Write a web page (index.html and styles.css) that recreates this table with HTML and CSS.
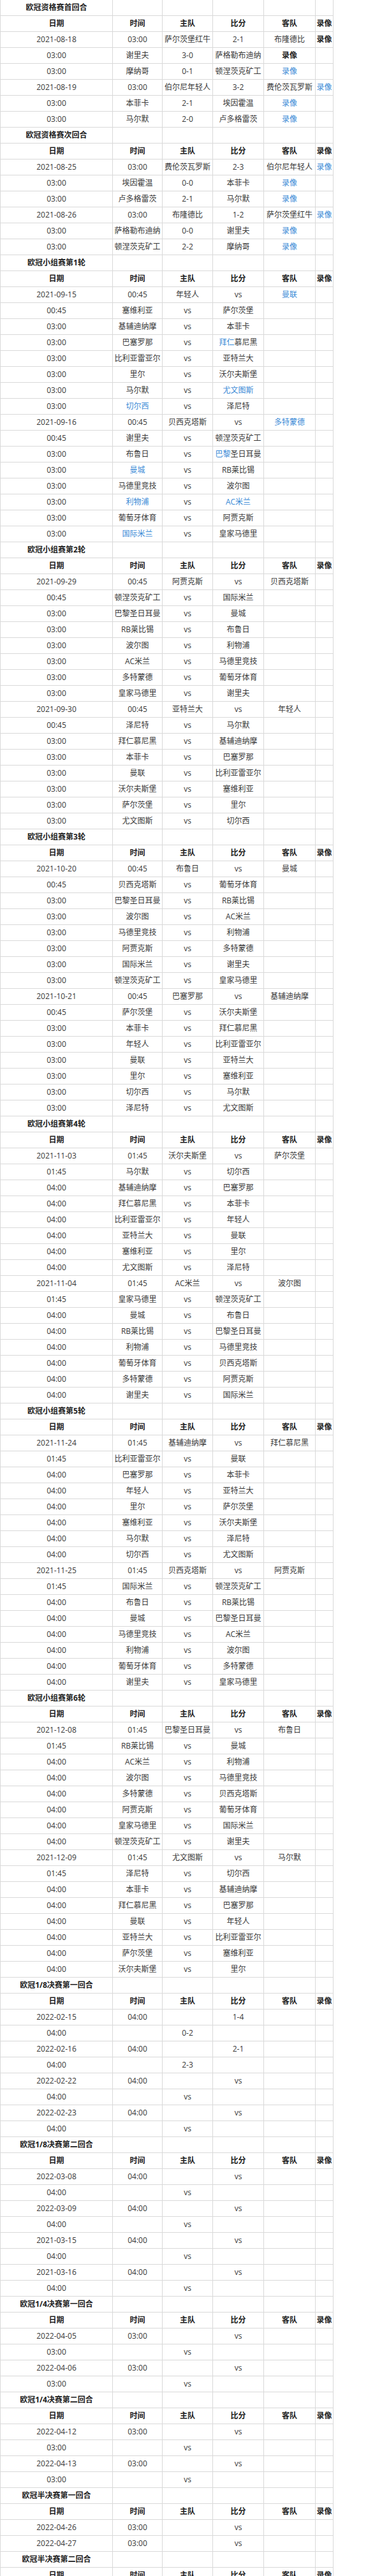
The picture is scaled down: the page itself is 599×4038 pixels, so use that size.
FILE: index.html
```html
<!DOCTYPE html>
<html lang="zh-CN">
<head>
<meta charset="utf-8">
<title>欧冠赛程</title>
<link rel="stylesheet" href="styles.css">
</head>
<body>
<table class="schedule">
<colgroup><col class="c1"><col class="c2"><col class="c3"><col class="c4"><col class="c5"><col class="c6"></colgroup>
<tbody>
<tr class="title"><td>欧冠资格赛首回合</td><td></td><td></td><td></td><td></td><td></td></tr>
<tr class="head"><td>日期</td><td>时间</td><td>主队</td><td>比分</td><td>客队</td><td>录像</td></tr>
<tr><td>2021-08-18</td><td>03:00</td><td>萨尔茨堡红牛</td><td>2-1</td><td>布隆德比</td><td><span class="vd">录像</span></td></tr>
<tr><td>03:00</td><td>谢里夫</td><td>3-0</td><td>萨格勒布迪纳</td><td><span class="vd">录像</span></td><td></td></tr>
<tr><td>03:00</td><td>摩纳哥</td><td>0-1</td><td>顿涅茨克矿工</td><td><span class="lk">录像</span></td><td></td></tr>
<tr><td>2021-08-19</td><td>03:00</td><td>伯尔尼年轻人</td><td>3-2</td><td>费伦茨瓦罗斯</td><td><span class="lk">录像</span></td></tr>
<tr><td>03:00</td><td>本菲卡</td><td>2-1</td><td>埃因霍温</td><td><span class="lk">录像</span></td><td></td></tr>
<tr><td>03:00</td><td>马尔默</td><td>2-0</td><td>卢多格雷茨</td><td><span class="lk">录像</span></td><td></td></tr>
<tr class="title"><td>欧冠资格赛次回合</td><td></td><td></td><td></td><td></td><td></td></tr>
<tr class="head"><td>日期</td><td>时间</td><td>主队</td><td>比分</td><td>客队</td><td>录像</td></tr>
<tr><td>2021-08-25</td><td>03:00</td><td>费伦茨瓦罗斯</td><td>2-3</td><td>伯尔尼年轻人</td><td><span class="lk">录像</span></td></tr>
<tr><td>03:00</td><td>埃因霍温</td><td>0-0</td><td>本菲卡</td><td><span class="lk">录像</span></td><td></td></tr>
<tr><td>03:00</td><td>卢多格雷茨</td><td>2-1</td><td>马尔默</td><td><span class="lk">录像</span></td><td></td></tr>
<tr><td>2021-08-26</td><td>03:00</td><td>布隆德比</td><td>1-2</td><td>萨尔茨堡红牛</td><td><span class="lk">录像</span></td></tr>
<tr><td>03:00</td><td>萨格勒布迪纳</td><td>0-0</td><td>谢里夫</td><td><span class="lk">录像</span></td><td></td></tr>
<tr><td>03:00</td><td>顿涅茨克矿工</td><td>2-2</td><td>摩纳哥</td><td><span class="lk">录像</span></td><td></td></tr>
<tr class="title"><td>欧冠小组赛第1轮</td><td></td><td></td><td></td><td></td><td></td></tr>
<tr class="head"><td>日期</td><td>时间</td><td>主队</td><td>比分</td><td>客队</td><td>录像</td></tr>
<tr><td>2021-09-15</td><td>00:45</td><td>年轻人</td><td>vs</td><td><span class="lk">曼联</span></td><td></td></tr>
<tr><td>00:45</td><td>塞维利亚</td><td>vs</td><td>萨尔茨堡</td><td></td><td></td></tr>
<tr><td>03:00</td><td>基辅迪纳摩</td><td>vs</td><td>本菲卡</td><td></td><td></td></tr>
<tr><td>03:00</td><td>巴塞罗那</td><td>vs</td><td><span class="lk">拜仁</span>慕尼黑</td><td></td><td></td></tr>
<tr><td>03:00</td><td>比利亚雷亚尔</td><td>vs</td><td>亚特兰大</td><td></td><td></td></tr>
<tr><td>03:00</td><td>里尔</td><td>vs</td><td>沃尔夫斯堡</td><td></td><td></td></tr>
<tr><td>03:00</td><td>马尔默</td><td>vs</td><td><span class="lk">尤文图斯</span></td><td></td><td></td></tr>
<tr><td>03:00</td><td><span class="lk">切尔西</span></td><td>vs</td><td>泽尼特</td><td></td><td></td></tr>
<tr><td>2021-09-16</td><td>00:45</td><td>贝西克塔斯</td><td>vs</td><td><span class="lk">多特蒙德</span></td><td></td></tr>
<tr><td>00:45</td><td>谢里夫</td><td>vs</td><td>顿涅茨克矿工</td><td></td><td></td></tr>
<tr><td>03:00</td><td>布鲁日</td><td>vs</td><td><span class="lk">巴黎</span>圣日耳曼</td><td></td><td></td></tr>
<tr><td>03:00</td><td><span class="lk">曼城</span></td><td>vs</td><td>RB莱比锡</td><td></td><td></td></tr>
<tr><td>03:00</td><td>马德里竞技</td><td>vs</td><td>波尔图</td><td></td><td></td></tr>
<tr><td>03:00</td><td><span class="lk">利物浦</span></td><td>vs</td><td><span class="lk">AC米兰</span></td><td></td><td></td></tr>
<tr><td>03:00</td><td>葡萄牙体育</td><td>vs</td><td>阿贾克斯</td><td></td><td></td></tr>
<tr><td>03:00</td><td><span class="lk">国际米兰</span></td><td>vs</td><td>皇家马德里</td><td></td><td></td></tr>
<tr class="title"><td>欧冠小组赛第2轮</td><td></td><td></td><td></td><td></td><td></td></tr>
<tr class="head"><td>日期</td><td>时间</td><td>主队</td><td>比分</td><td>客队</td><td>录像</td></tr>
<tr><td>2021-09-29</td><td>00:45</td><td>阿贾克斯</td><td>vs</td><td>贝西克塔斯</td><td></td></tr>
<tr><td>00:45</td><td>顿涅茨克矿工</td><td>vs</td><td>国际米兰</td><td></td><td></td></tr>
<tr><td>03:00</td><td>巴黎圣日耳曼</td><td>vs</td><td>曼城</td><td></td><td></td></tr>
<tr><td>03:00</td><td>RB莱比锡</td><td>vs</td><td>布鲁日</td><td></td><td></td></tr>
<tr><td>03:00</td><td>波尔图</td><td>vs</td><td>利物浦</td><td></td><td></td></tr>
<tr><td>03:00</td><td>AC米兰</td><td>vs</td><td>马德里竞技</td><td></td><td></td></tr>
<tr><td>03:00</td><td>多特蒙德</td><td>vs</td><td>葡萄牙体育</td><td></td><td></td></tr>
<tr><td>03:00</td><td>皇家马德里</td><td>vs</td><td>谢里夫</td><td></td><td></td></tr>
<tr><td>2021-09-30</td><td>00:45</td><td>亚特兰大</td><td>vs</td><td>年轻人</td><td></td></tr>
<tr><td>00:45</td><td>泽尼特</td><td>vs</td><td>马尔默</td><td></td><td></td></tr>
<tr><td>03:00</td><td>拜仁慕尼黑</td><td>vs</td><td>基辅迪纳摩</td><td></td><td></td></tr>
<tr><td>03:00</td><td>本菲卡</td><td>vs</td><td>巴塞罗那</td><td></td><td></td></tr>
<tr><td>03:00</td><td>曼联</td><td>vs</td><td>比利亚雷亚尔</td><td></td><td></td></tr>
<tr><td>03:00</td><td>沃尔夫斯堡</td><td>vs</td><td>塞维利亚</td><td></td><td></td></tr>
<tr><td>03:00</td><td>萨尔茨堡</td><td>vs</td><td>里尔</td><td></td><td></td></tr>
<tr><td>03:00</td><td>尤文图斯</td><td>vs</td><td>切尔西</td><td></td><td></td></tr>
<tr class="title"><td>欧冠小组赛第3轮</td><td></td><td></td><td></td><td></td><td></td></tr>
<tr class="head"><td>日期</td><td>时间</td><td>主队</td><td>比分</td><td>客队</td><td>录像</td></tr>
<tr><td>2021-10-20</td><td>00:45</td><td>布鲁日</td><td>vs</td><td>曼城</td><td></td></tr>
<tr><td>00:45</td><td>贝西克塔斯</td><td>vs</td><td>葡萄牙体育</td><td></td><td></td></tr>
<tr><td>03:00</td><td>巴黎圣日耳曼</td><td>vs</td><td>RB莱比锡</td><td></td><td></td></tr>
<tr><td>03:00</td><td>波尔图</td><td>vs</td><td>AC米兰</td><td></td><td></td></tr>
<tr><td>03:00</td><td>马德里竞技</td><td>vs</td><td>利物浦</td><td></td><td></td></tr>
<tr><td>03:00</td><td>阿贾克斯</td><td>vs</td><td>多特蒙德</td><td></td><td></td></tr>
<tr><td>03:00</td><td>国际米兰</td><td>vs</td><td>谢里夫</td><td></td><td></td></tr>
<tr><td>03:00</td><td>顿涅茨克矿工</td><td>vs</td><td>皇家马德里</td><td></td><td></td></tr>
<tr><td>2021-10-21</td><td>00:45</td><td>巴塞罗那</td><td>vs</td><td>基辅迪纳摩</td><td></td></tr>
<tr><td>00:45</td><td>萨尔茨堡</td><td>vs</td><td>沃尔夫斯堡</td><td></td><td></td></tr>
<tr><td>03:00</td><td>本菲卡</td><td>vs</td><td>拜仁慕尼黑</td><td></td><td></td></tr>
<tr><td>03:00</td><td>年轻人</td><td>vs</td><td>比利亚雷亚尔</td><td></td><td></td></tr>
<tr><td>03:00</td><td>曼联</td><td>vs</td><td>亚特兰大</td><td></td><td></td></tr>
<tr><td>03:00</td><td>里尔</td><td>vs</td><td>塞维利亚</td><td></td><td></td></tr>
<tr><td>03:00</td><td>切尔西</td><td>vs</td><td>马尔默</td><td></td><td></td></tr>
<tr><td>03:00</td><td>泽尼特</td><td>vs</td><td>尤文图斯</td><td></td><td></td></tr>
<tr class="title"><td>欧冠小组赛第4轮</td><td></td><td></td><td></td><td></td><td></td></tr>
<tr class="head"><td>日期</td><td>时间</td><td>主队</td><td>比分</td><td>客队</td><td>录像</td></tr>
<tr><td>2021-11-03</td><td>01:45</td><td>沃尔夫斯堡</td><td>vs</td><td>萨尔茨堡</td><td></td></tr>
<tr><td>01:45</td><td>马尔默</td><td>vs</td><td>切尔西</td><td></td><td></td></tr>
<tr><td>04:00</td><td>基辅迪纳摩</td><td>vs</td><td>巴塞罗那</td><td></td><td></td></tr>
<tr><td>04:00</td><td>拜仁慕尼黑</td><td>vs</td><td>本菲卡</td><td></td><td></td></tr>
<tr><td>04:00</td><td>比利亚雷亚尔</td><td>vs</td><td>年轻人</td><td></td><td></td></tr>
<tr><td>04:00</td><td>亚特兰大</td><td>vs</td><td>曼联</td><td></td><td></td></tr>
<tr><td>04:00</td><td>塞维利亚</td><td>vs</td><td>里尔</td><td></td><td></td></tr>
<tr><td>04:00</td><td>尤文图斯</td><td>vs</td><td>泽尼特</td><td></td><td></td></tr>
<tr><td>2021-11-04</td><td>01:45</td><td>AC米兰</td><td>vs</td><td>波尔图</td><td></td></tr>
<tr><td>01:45</td><td>皇家马德里</td><td>vs</td><td>顿涅茨克矿工</td><td></td><td></td></tr>
<tr><td>04:00</td><td>曼城</td><td>vs</td><td>布鲁日</td><td></td><td></td></tr>
<tr><td>04:00</td><td>RB莱比锡</td><td>vs</td><td>巴黎圣日耳曼</td><td></td><td></td></tr>
<tr><td>04:00</td><td>利物浦</td><td>vs</td><td>马德里竞技</td><td></td><td></td></tr>
<tr><td>04:00</td><td>葡萄牙体育</td><td>vs</td><td>贝西克塔斯</td><td></td><td></td></tr>
<tr><td>04:00</td><td>多特蒙德</td><td>vs</td><td>阿贾克斯</td><td></td><td></td></tr>
<tr><td>04:00</td><td>谢里夫</td><td>vs</td><td>国际米兰</td><td></td><td></td></tr>
<tr class="title"><td>欧冠小组赛第5轮</td><td></td><td></td><td></td><td></td><td></td></tr>
<tr class="head"><td>日期</td><td>时间</td><td>主队</td><td>比分</td><td>客队</td><td>录像</td></tr>
<tr><td>2021-11-24</td><td>01:45</td><td>基辅迪纳摩</td><td>vs</td><td>拜仁慕尼黑</td><td></td></tr>
<tr><td>01:45</td><td>比利亚雷亚尔</td><td>vs</td><td>曼联</td><td></td><td></td></tr>
<tr><td>04:00</td><td>巴塞罗那</td><td>vs</td><td>本菲卡</td><td></td><td></td></tr>
<tr><td>04:00</td><td>年轻人</td><td>vs</td><td>亚特兰大</td><td></td><td></td></tr>
<tr><td>04:00</td><td>里尔</td><td>vs</td><td>萨尔茨堡</td><td></td><td></td></tr>
<tr><td>04:00</td><td>塞维利亚</td><td>vs</td><td>沃尔夫斯堡</td><td></td><td></td></tr>
<tr><td>04:00</td><td>马尔默</td><td>vs</td><td>泽尼特</td><td></td><td></td></tr>
<tr><td>04:00</td><td>切尔西</td><td>vs</td><td>尤文图斯</td><td></td><td></td></tr>
<tr><td>2021-11-25</td><td>01:45</td><td>贝西克塔斯</td><td>vs</td><td>阿贾克斯</td><td></td></tr>
<tr><td>01:45</td><td>国际米兰</td><td>vs</td><td>顿涅茨克矿工</td><td></td><td></td></tr>
<tr><td>04:00</td><td>布鲁日</td><td>vs</td><td>RB莱比锡</td><td></td><td></td></tr>
<tr><td>04:00</td><td>曼城</td><td>vs</td><td>巴黎圣日耳曼</td><td></td><td></td></tr>
<tr><td>04:00</td><td>马德里竞技</td><td>vs</td><td>AC米兰</td><td></td><td></td></tr>
<tr><td>04:00</td><td>利物浦</td><td>vs</td><td>波尔图</td><td></td><td></td></tr>
<tr><td>04:00</td><td>葡萄牙体育</td><td>vs</td><td>多特蒙德</td><td></td><td></td></tr>
<tr><td>04:00</td><td>谢里夫</td><td>vs</td><td>皇家马德里</td><td></td><td></td></tr>
<tr class="title"><td>欧冠小组赛第6轮</td><td></td><td></td><td></td><td></td><td></td></tr>
<tr class="head"><td>日期</td><td>时间</td><td>主队</td><td>比分</td><td>客队</td><td>录像</td></tr>
<tr><td>2021-12-08</td><td>01:45</td><td>巴黎圣日耳曼</td><td>vs</td><td>布鲁日</td><td></td></tr>
<tr><td>01:45</td><td>RB莱比锡</td><td>vs</td><td>曼城</td><td></td><td></td></tr>
<tr><td>04:00</td><td>AC米兰</td><td>vs</td><td>利物浦</td><td></td><td></td></tr>
<tr><td>04:00</td><td>波尔图</td><td>vs</td><td>马德里竞技</td><td></td><td></td></tr>
<tr><td>04:00</td><td>多特蒙德</td><td>vs</td><td>贝西克塔斯</td><td></td><td></td></tr>
<tr><td>04:00</td><td>阿贾克斯</td><td>vs</td><td>葡萄牙体育</td><td></td><td></td></tr>
<tr><td>04:00</td><td>皇家马德里</td><td>vs</td><td>国际米兰</td><td></td><td></td></tr>
<tr><td>04:00</td><td>顿涅茨克矿工</td><td>vs</td><td>谢里夫</td><td></td><td></td></tr>
<tr><td>2021-12-09</td><td>01:45</td><td>尤文图斯</td><td>vs</td><td>马尔默</td><td></td></tr>
<tr><td>01:45</td><td>泽尼特</td><td>vs</td><td>切尔西</td><td></td><td></td></tr>
<tr><td>04:00</td><td>本菲卡</td><td>vs</td><td>基辅迪纳摩</td><td></td><td></td></tr>
<tr><td>04:00</td><td>拜仁慕尼黑</td><td>vs</td><td>巴塞罗那</td><td></td><td></td></tr>
<tr><td>04:00</td><td>曼联</td><td>vs</td><td>年轻人</td><td></td><td></td></tr>
<tr><td>04:00</td><td>亚特兰大</td><td>vs</td><td>比利亚雷亚尔</td><td></td><td></td></tr>
<tr><td>04:00</td><td>萨尔茨堡</td><td>vs</td><td>塞维利亚</td><td></td><td></td></tr>
<tr><td>04:00</td><td>沃尔夫斯堡</td><td>vs</td><td>里尔</td><td></td><td></td></tr>
<tr class="title"><td>欧冠1/8决赛第一回合</td><td></td><td></td><td></td><td></td><td></td></tr>
<tr class="head"><td>日期</td><td>时间</td><td>主队</td><td>比分</td><td>客队</td><td>录像</td></tr>
<tr><td>2022-02-15</td><td>04:00</td><td></td><td>1-4</td><td></td><td></td></tr>
<tr><td>04:00</td><td></td><td>0-2</td><td></td><td></td><td></td></tr>
<tr><td>2022-02-16</td><td>04:00</td><td></td><td>2-1</td><td></td><td></td></tr>
<tr><td>04:00</td><td></td><td>2-3</td><td></td><td></td><td></td></tr>
<tr><td>2022-02-22</td><td>04:00</td><td></td><td>vs</td><td></td><td></td></tr>
<tr><td>04:00</td><td></td><td>vs</td><td></td><td></td><td></td></tr>
<tr><td>2022-02-23</td><td>04:00</td><td></td><td>vs</td><td></td><td></td></tr>
<tr><td>04:00</td><td></td><td>vs</td><td></td><td></td><td></td></tr>
<tr class="title"><td>欧冠1/8决赛第二回合</td><td></td><td></td><td></td><td></td><td></td></tr>
<tr class="head"><td>日期</td><td>时间</td><td>主队</td><td>比分</td><td>客队</td><td>录像</td></tr>
<tr><td>2022-03-08</td><td>04:00</td><td></td><td>vs</td><td></td><td></td></tr>
<tr><td>04:00</td><td></td><td>vs</td><td></td><td></td><td></td></tr>
<tr><td>2022-03-09</td><td>04:00</td><td></td><td>vs</td><td></td><td></td></tr>
<tr><td>04:00</td><td></td><td>vs</td><td></td><td></td><td></td></tr>
<tr><td>2021-03-15</td><td>04:00</td><td></td><td>vs</td><td></td><td></td></tr>
<tr><td>04:00</td><td></td><td>vs</td><td></td><td></td><td></td></tr>
<tr><td>2021-03-16</td><td>04:00</td><td></td><td>vs</td><td></td><td></td></tr>
<tr><td>04:00</td><td></td><td>vs</td><td></td><td></td><td></td></tr>
<tr class="title"><td>欧冠1/4决赛第一回合</td><td></td><td></td><td></td><td></td><td></td></tr>
<tr class="head"><td>日期</td><td>时间</td><td>主队</td><td>比分</td><td>客队</td><td>录像</td></tr>
<tr><td>2022-04-05</td><td>03:00</td><td></td><td>vs</td><td></td><td></td></tr>
<tr><td>03:00</td><td></td><td>vs</td><td></td><td></td><td></td></tr>
<tr><td>2022-04-06</td><td>03:00</td><td></td><td>vs</td><td></td><td></td></tr>
<tr><td>03:00</td><td></td><td>vs</td><td></td><td></td><td></td></tr>
<tr class="title"><td>欧冠1/4决赛第二回合</td><td></td><td></td><td></td><td></td><td></td></tr>
<tr class="head"><td>日期</td><td>时间</td><td>主队</td><td>比分</td><td>客队</td><td>录像</td></tr>
<tr><td>2022-04-12</td><td>03:00</td><td></td><td>vs</td><td></td><td></td></tr>
<tr><td>03:00</td><td></td><td>vs</td><td></td><td></td><td></td></tr>
<tr><td>2022-04-13</td><td>03:00</td><td></td><td>vs</td><td></td><td></td></tr>
<tr><td>03:00</td><td></td><td>vs</td><td></td><td></td><td></td></tr>
<tr class="title"><td>欧冠半决赛第一回合</td><td></td><td></td><td></td><td></td><td></td></tr>
<tr class="head"><td>日期</td><td>时间</td><td>主队</td><td>比分</td><td>客队</td><td>录像</td></tr>
<tr><td>2022-04-26</td><td>03:00</td><td></td><td>vs</td><td></td><td></td></tr>
<tr><td>2022-04-27</td><td>03:00</td><td></td><td>vs</td><td></td><td></td></tr>
<tr class="title"><td>欧冠半决赛第二回合</td><td></td><td></td><td></td><td></td><td></td></tr>
<tr class="head"><td>日期</td><td>时间</td><td>主队</td><td>比分</td><td>客队</td><td>录像</td></tr>
</tbody>
</table>
</body>
</html>
```

FILE: styles.css
```css
html, body {
  margin: 0;
  padding: 0;
  background: #ffffff;
}

body {
  font-family: "Open Sans", "Noto Sans CJK SC", sans-serif;
  font-size: 12px;
  color: #383838;
}

.schedule {
  border-collapse: separate;
  border-spacing: 0;
  table-layout: fixed;
  width: 523px;
}

.schedule .c1 { width: 177px; }
.schedule .c2 { width: 78px; }
.schedule .c3 { width: 79px; }
.schedule .c4 { width: 80px; }
.schedule .c5 { width: 81px; }
.schedule .c6 { width: 28px; }

.schedule td {
  box-sizing: border-box;
  height: 25px;
  padding: 0 1px;
  text-align: center;
  vertical-align: middle;
  line-height: 24px;
  white-space: nowrap;
  overflow: hidden;
  border-right: 1px solid #d9d9d9;
  border-bottom: 1px solid #d9d9d9;
}

.schedule td:first-child {
  border-left: 1px solid #d9d9d9;
}

.schedule .title td,
.schedule .head td {
  font-weight: bold;
  color: #222222;
}

.lk {
  color: #3a8ad6;
}

.vd {
  font-weight: bold;
  color: #222222;
}
```
